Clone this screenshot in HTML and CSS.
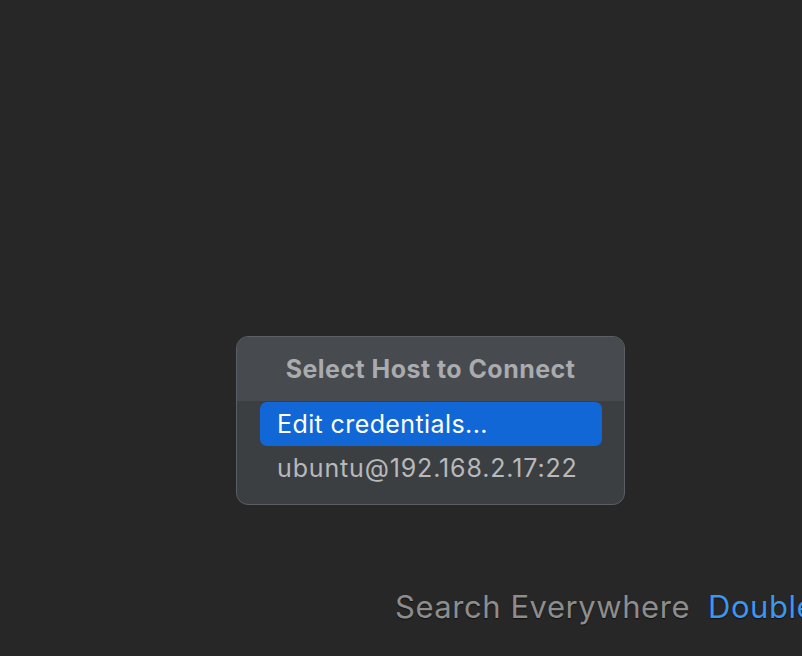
FILE: index.html
```html
<!DOCTYPE html>
<html>
<head>
<meta charset="utf-8">
<link rel="stylesheet" href="styles.css">
</head>
<body>
<div class="page">
  <div class="popup">
    <div class="popup-header">Select Host to Connect</div>
    <div class="popup-list">
      <div class="item selected">Edit credentials...</div>
      <div class="item">ubuntu@192.168.2.17:22</div>
    </div>
  </div>
  <div class="hint">
    <span class="hint-label">Search Everywhere</span>
    <span class="hint-key">Double Shift</span>
  </div>
</div>
</body>
</html>
```
FILE: styles.css
```css
html, body {
  margin: 0;
  padding: 0;
  background: #272727;
  overflow: hidden;
}
.page {
  width: 802px;
  height: 656px;
  box-sizing: border-box;
  padding-top: 336px;
  font-family: Inter, "Noto Sans", sans-serif;
  display: flex;
  flex-direction: column;
  overflow: hidden;
}
.popup {
  margin-left: 236px;
  width: 389px;
  height: 169px;
  box-sizing: border-box;
  border: 1px solid #5b5e62;
  border-radius: 12px;
  background: #3c3f42;
  overflow: hidden;
}
.popup-header {
  height: 64px;
  background: #474a4e;
  color: #a9abae;
  font-weight: 700;
  font-size: 25px;
  letter-spacing: 0.45px;
  display: flex;
  align-items: center;
  justify-content: center;
}
.popup-list {
  padding: 1px 22px 0 23px;
}
.item {
  height: 44px;
  display: flex;
  align-items: center;
  padding-left: 17px;
  font-size: 25px;
  letter-spacing: 0.85px;
  color: #b7b9bb;
  border-radius: 7px;
}
.item.selected {
  background: #1167d6;
  color: #ffffff;
  letter-spacing: 0.4px;
}
.hint {
  margin-top: 83px;
  margin-left: 395px;
  white-space: nowrap;
  font-size: 31px;
  letter-spacing: 0.55px;
  display: flex;
  gap: 18px;
  text-shadow: 0 1px 1px #111;
}
.hint-label {
  color: #8d8d8d;
}
.hint-key {
  color: #3d96ef;
}
```
